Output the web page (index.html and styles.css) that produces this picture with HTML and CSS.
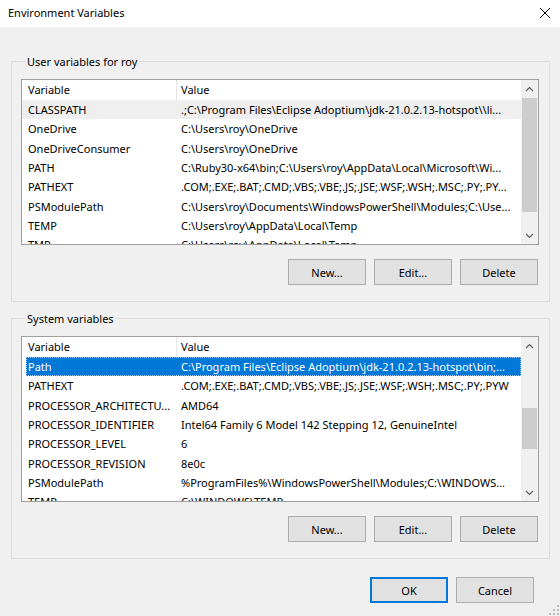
FILE: index.html
```html
<!DOCTYPE html>
<html>
<head>
<meta charset="utf-8">
<title>Environment Variables</title>
<link rel="stylesheet" href="styles.css">
</head>
<body>
<div class="window">
  <div class="titlebar">
    <span class="title">Environment Variables</span>
    <svg class="close" width="12" height="12" viewBox="0 0 12 12"><path d="M1 1L11 11M11 1L1 11" stroke="#000" stroke-width="1"/></svg>
  </div>
  <div class="content">
    <section class="group">
      <div class="legend">User variables for roy</div>
      <div class="list">
        <div class="list-main">
          <div class="row header"><div class="c1">Variable</div><div class="c2">Value</div></div>
          <div class="row hot"><div class="c1">CLASSPATH</div><div class="c2">.;C:\Program Files\Eclipse Adoptium\jdk-21.0.2.13-hotspot\\li...</div></div>
          <div class="row"><div class="c1">OneDrive</div><div class="c2">C:\Users\roy\OneDrive</div></div>
          <div class="row"><div class="c1">OneDriveConsumer</div><div class="c2">C:\Users\roy\OneDrive</div></div>
          <div class="row"><div class="c1">PATH</div><div class="c2">C:\Ruby30-x64\bin;C:\Users\roy\AppData\Local\Microsoft\Wi...</div></div>
          <div class="row"><div class="c1">PATHEXT</div><div class="c2">.COM;.EXE;.BAT;.CMD;.VBS;.VBE;.JS;.JSE;.WSF;.WSH;.MSC;.PY;.PY...</div></div>
          <div class="row"><div class="c1">PSModulePath</div><div class="c2">C:\Users\roy\Documents\WindowsPowerShell\Modules;C:\Use...</div></div>
          <div class="row"><div class="c1">TEMP</div><div class="c2">C:\Users\roy\AppData\Local\Temp</div></div>
          <div class="row"><div class="c1">TMP</div><div class="c2">C:\Users\roy\AppData\Local\Temp</div></div>
        </div>
        <div class="scrollbar">
          <div class="arrow"><svg width="9" height="6" viewBox="0 0 9 6"><path d="M1 5L4.5 1.5L8 5" fill="none" stroke="#606060" stroke-width="1.2"/></svg></div>
          <div class="track"><div class="thumb" style="margin-top:1px;height:114px"></div></div>
          <div class="arrow"><svg width="9" height="6" viewBox="0 0 9 6"><path d="M1 1L4.5 4.5L8 1" fill="none" stroke="#606060" stroke-width="1.2"/></svg></div>
        </div>
      </div>
      <div class="buttons">
        <button class="btn">New...</button>
        <button class="btn">Edit...</button>
        <button class="btn">Delete</button>
      </div>
    </section>

    <section class="group second">
      <div class="legend">System variables</div>
      <div class="list">
        <div class="list-main">
          <div class="row header"><div class="c1">Variable</div><div class="c2">Value</div></div>
          <div class="row selected"><div class="c1">Path</div><div class="c2">C:\Program Files\Eclipse Adoptium\jdk-21.0.2.13-hotspot\bin;...</div></div>
          <div class="row"><div class="c1">PATHEXT</div><div class="c2">.COM;.EXE;.BAT;.CMD;.VBS;.VBE;.JS;.JSE;.WSF;.WSH;.MSC;.PY;.PYW</div></div>
          <div class="row"><div class="c1">PROCESSOR_ARCHITECTU...</div><div class="c2">AMD64</div></div>
          <div class="row"><div class="c1">PROCESSOR_IDENTIFIER</div><div class="c2">Intel64 Family 6 Model 142 Stepping 12, GenuineIntel</div></div>
          <div class="row"><div class="c1">PROCESSOR_LEVEL</div><div class="c2">6</div></div>
          <div class="row"><div class="c1">PROCESSOR_REVISION</div><div class="c2">8e0c</div></div>
          <div class="row"><div class="c1">PSModulePath</div><div class="c2">%ProgramFiles%\WindowsPowerShell\Modules;C:\WINDOWS...</div></div>
          <div class="row"><div class="c1">TEMP</div><div class="c2">C:\WINDOWS\TEMP</div></div>
        </div>
        <div class="scrollbar">
          <div class="arrow"><svg width="9" height="6" viewBox="0 0 9 6"><path d="M1 5L4.5 1.5L8 5" fill="none" stroke="#606060" stroke-width="1.2"/></svg></div>
          <div class="track"><div class="thumb" style="margin-top:54px;height:41px"></div></div>
          <div class="arrow"><svg width="9" height="6" viewBox="0 0 9 6"><path d="M1 1L4.5 4.5L8 1" fill="none" stroke="#606060" stroke-width="1.2"/></svg></div>
        </div>
      </div>
      <div class="buttons">
        <button class="btn">New...</button>
        <button class="btn">Edit...</button>
        <button class="btn">Delete</button>
      </div>
    </section>

    <div class="footer">
      <button class="btn default">OK</button>
      <button class="btn">Cancel</button>
    </div>
  </div>
  <svg class="grip" width="10" height="10" viewBox="0 0 10 10">
    <rect x="8" y="0" width="2" height="2" fill="#bcbcbc"/>
    <rect x="4" y="4" width="2" height="2" fill="#bcbcbc"/>
    <rect x="8" y="4" width="2" height="2" fill="#bcbcbc"/>
    <rect x="0" y="8" width="2" height="2" fill="#bcbcbc"/>
    <rect x="4" y="8" width="2" height="2" fill="#bcbcbc"/>
    <rect x="8" y="8" width="2" height="2" fill="#bcbcbc"/>
  </svg>
</div>
</body>
</html>
```

FILE: styles.css
```css
* { box-sizing: border-box; }
html, body { margin: 0; padding: 0; }
body {
  width: 560px;
  height: 616px;
  overflow: hidden;
  background: #f0f0f0;
  font-family: "Noto Sans", "Open Sans", sans-serif;
  font-size: 11px;
  color: #000;
}
.window {
  position: relative;
  width: 560px;
  height: 616px;
  background: #f0f0f0;
}
.titlebar {
  height: 27px;
  background: #fff;
  display: flex;
  align-items: center;
  justify-content: space-between;
  padding: 0 9px 1px 8px;
}
.title { line-height: 16px; }
.close { display: block; }
.content {
  padding: 0 10px 0 11px;
}
.group {
  margin-top: 34px;
  border: 1px solid #dcdcdc;
  padding: 0 10px 16px 9px;
}
.group.second { margin-top: 16px; }
.legend {
  width: fit-content;
  height: 16px;
  line-height: 16px;
  margin: -8px 0 0 4px;
  padding: 0 2px;
  background: #f0f0f0;
}
.list {
  margin-top: 9px;
  height: 166px;
  border: 1px solid #a0a0a0;
  background: #fff;
  display: flex;
  overflow: hidden;
}
.list-main {
  flex: 1;
  min-width: 0;
  overflow: hidden;
}
.row {
  display: flex;
  height: 19.33px;
  line-height: 20px;
  white-space: nowrap;
}
.row.header { height: 20px; line-height: 20px; }
.c1 {
  width: 155px;
  flex: none;
  padding-left: 6px;
  overflow: hidden;
}
.c2 {
  flex: 1;
  min-width: 0;
  padding-left: 4px;
  overflow: hidden;
}
.header .c1 { border-right: 1px solid #e5e5e5; }
.row.hot { background: #efefef; }
.row.selected {
  background: #0078d7;
  color: #fff;
  outline: 1px dotted #9fc9ee;
  outline-offset: -1px;
  margin-left: 4px;
}
.row.selected .c1 { width: 151px; padding-left: 2px; }
.scrollbar {
  width: 17px;
  flex: none;
  background: #f0f0f0;
  display: flex;
  flex-direction: column;
}
.arrow {
  height: 17px;
  display: flex;
  align-items: center;
  justify-content: center;
}
.arrow svg { display: block; }
.track { flex: 1; }
.thumb {
  width: 15px;
  margin-left: 1px;
  background: #cdcdcd;
}
.buttons {
  margin-top: 14px;
  margin-right: 1px;
  display: flex;
  justify-content: flex-end;
  gap: 8px;
}
.btn {
  width: 78px;
  height: 26px;
  padding: 0;
  margin: 0;
  border: 1px solid #adadad;
  background: #e1e1e1;
  font-family: inherit;
  font-size: 11px;
  color: #000;
}
.btn.default {
  border: 1px solid #0078d7;
  box-shadow: inset 0 0 0 1px #0078d7;
}
.footer {
  margin-top: 18px;
  padding-right: 16px;
  display: flex;
  justify-content: flex-end;
  gap: 8px;
}
.grip {
  position: absolute;
  right: 1px;
  bottom: 1px;
}
```
